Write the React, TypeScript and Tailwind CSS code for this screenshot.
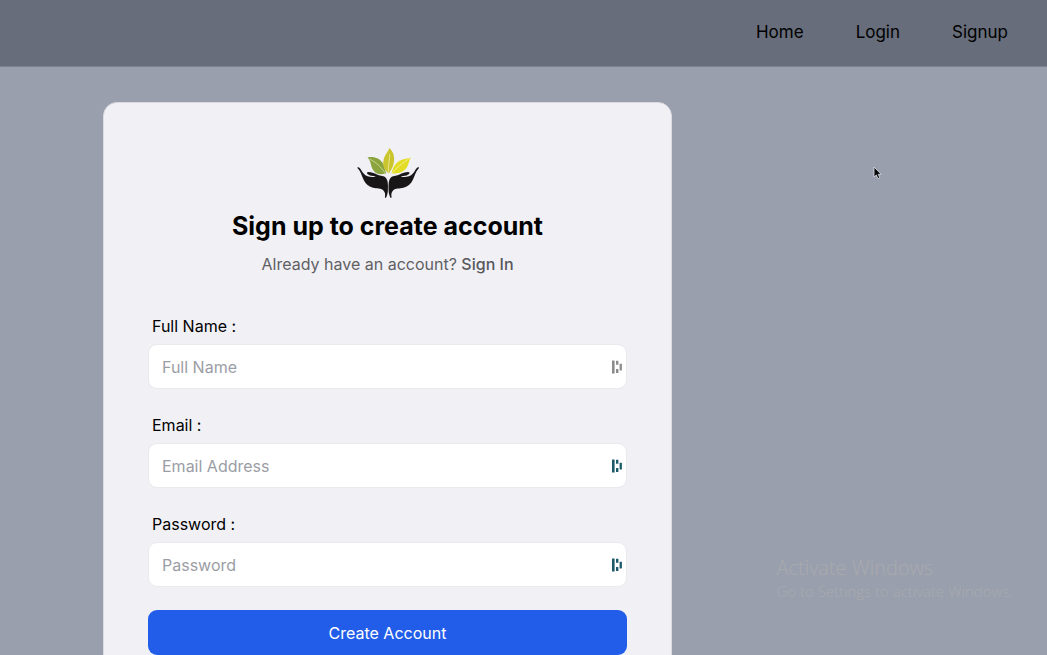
import { useState } from "react";

type FieldProps = {
  id: string;
  label: string;
  placeholder: string;
  type: string;
  marker: string;
};

function FieldMarker({ className }: { className: string }) {
  return (
    <svg
      viewBox="0 0 10 14"
      aria-hidden="true"
      className={`pointer-events-none absolute top-4 right-[5px] h-[14px] w-[10px] ${className}`}
      fill="currentColor"
    >
      <rect x="0" y="0.5" width="2.6" height="13" rx="0.3" />
      <rect x="4" y="0.8" width="2.4" height="4" rx="0.3" />
      <rect x="4" y="9" width="2.4" height="4" rx="0.3" />
      <rect x="7.6" y="3.8" width="2.3" height="6.6" rx="0.3" />
    </svg>
  );
}

function Field({ id, label, placeholder, type, marker }: FieldProps) {
  const [value, setValue] = useState("");
  return (
    <div>
      <label htmlFor={id} className="block pl-1 leading-6 text-black">
        {label}
      </label>
      <div className="relative mt-[6px]">
        <input
          id={id}
          type={type}
          value={value}
          placeholder={placeholder}
          onChange={(event) => setValue(event.target.value)}
          className="block h-[45px] w-full rounded-[9px] border border-[#e9e9ee] bg-white px-[13px] text-black outline-none placeholder:text-[#9b9da5] focus:border-blue-400"
        />
        <FieldMarker className={marker} />
      </div>
    </div>
  );
}

function Logo() {
  return (
    <svg viewBox="-2 0 100 75" className="h-[75px] w-[100px]" role="img" aria-label="Hands holding leaves">
      <path d="M27.500 22.500C33 21 40 23 43 28.500c2 3.500 1.700 6.500 3.300 9.700C40 40.500 35 39 32.500 34 30.500 30 31 26 27.500 22.500Z" fill="#8ca43e" />
      <path d="M29.500 24C37 28 41 32 45 38" fill="none" stroke="#dfe6b0" strokeWidth="0.700" />
      <path d="M49.500 13C54.500 18 55 24 53.300 30c-1.200 4-3 5.500-4.300 8.500-4.500-3.500-6.500-7-5.600-12.500C44.200 20.500 47.500 17.500 49.500 13Z" fill="#cac52c" />
      <path d="M49.700 19C50 26 47.500 31 48.500 37.500" fill="none" stroke="#f3efb4" strokeWidth="0.700" />
      <path d="M71 22.300c-2.600 3.600-2 8.700-6 12.500-3.500 3.400-8.500 4-13.500 3.700.8-4.500 2.500-8.700 6.500-11.700 4.300-3.300 8.800-2.500 13-4.500Z" fill="#e3dd27" />
      <path d="M69.500 23.500C62 28 56.500 33 52 38" fill="none" stroke="#f8f5a5" strokeWidth="0.700" />
      <g fill="#191617">
        <path d="M17.500 32.500C19 31.700 20.500 34 22 36.500c2 3.200 4.500 4.900 8 5.300 2.400.3 5 .5 5.600-.1-1.200-1-3.600-.6-5.700-1.300-1.600-.6-3.200-1.600-2.900-2.900.4-1.100 3.600-.5 5.700.2 3.300 1.100 5.300 2.500 8.300 3 3.300.5 5.300 1.400 6.300 4.800.8 3 .7 6.500.6 10-.1 2.700-.9 5.600-2.100 7.500l-.9-.5c.6-3 .2-5.700-1.700-7.300-2.300-2-6.200-1.400-10.200-2.400-4.700-1.200-7.500-4-9.500-8.300-2-4.300-2.600-7.500-5.200-10.500-.7-.8-1-1.200-.8-1.500Z" />
        <path d="M79 32.500C77.500 31.700 76 34 74.500 36.500c-2 3.200-4.500 4.900-8 5.300-2.400.3-5 .5-5.600-.1 1.200-1 3.600-.6 5.700-1.300 1.600-.6 3.200-1.600 2.900-2.900-.4-1.100-3.600-.5-5.700.2-3.300 1.100-5.300 2.500-8.300 3-3.300.5-5.300 1.400-6.300 4.800-.8 3-.7 6.500-.6 10 .1 2.700.9 5.600 2.100 7.500l.9-.5c-.6-3-.2-5.700 1.700-7.300 2.300-2 6.200-1.400 10.200-2.400 4.700-1.200 7.500-4 9.500-8.300 2-4.300 2.600-7.500 5.200-10.500.7-.8 1-1.200.8-1.500Z" />
      </g>
    </svg>
  );
}

export default function App() {
  return (
    <div className="relative flex h-screen flex-col overflow-x-hidden overflow-y-clip bg-[#999fad] font-['Inter','Liberation_Sans',sans-serif] text-[16px] text-black">
      <header className="shrink-0 border-b border-[#7c828f] bg-[#676d7a]">
        <nav className="flex h-[66px] items-center justify-end gap-[52px] pr-[39px] text-[17px]">
          <a href="#home">Home</a>
          <a href="#login">Login</a>
          <a href="#signup">Signup</a>
        </nav>
      </header>

      <main className="mt-[35px] ml-[103px] w-full max-w-[569px] shrink-0 rounded-[14px] border border-[#dadbe1] bg-[#f1f0f5] px-11 pt-8 pb-11">
        <div className="flex justify-center">
          <Logo />
        </div>
        <h1 className="text-center text-[25px] leading-8 font-bold">
          Sign up to create account
        </h1>
        <p className="mt-[10px] text-center leading-6 text-[#606064]">
          Already have an account?{" "}
          <a href="#login" className="font-medium text-[#57575b]">
            Sign In
          </a>
        </p>
        <form className="mt-[38px]" onSubmit={(event) => event.preventDefault()}>
          <div className="space-y-6">
            <Field id="name" label="Full Name :" placeholder="Full Name" type="text" marker="text-[#8b8b8e]" />
            <Field id="email" label="Email :" placeholder="Email Address" type="email" marker="text-[#1c5969]" />
            <Field id="password" label="Password :" placeholder="Password" type="password" marker="text-[#1c5969]" />
          </div>
          <button type="submit" className="mt-[23px] h-[45px] w-full rounded-[9px] bg-[#225de9] text-white">
            Create Account
          </button>
        </form>
      </main>

      <aside className="pointer-events-none absolute right-[34px] bottom-[53px] font-['Open_Sans','Noto_Sans',sans-serif] font-light text-[#a9aaae]">
        <p className="text-[20px] leading-6">Activate Windows</p>
        <p className="text-[15px] leading-[22px]">Go to Settings to activate Windows.</p>
      </aside>

      <svg viewBox="0 0 9 14" aria-hidden="true" className="pointer-events-none absolute top-[166px] left-[873px] h-[14px] w-[9px]">
        <path d="M1 1v10l2.300-2 1.600 3.600 1.900-.8-1.600-3.500h3Z" fill="#08090b" stroke="#dfe1e6" strokeWidth="0.800" />
      </svg>
    </div>
  );
}
